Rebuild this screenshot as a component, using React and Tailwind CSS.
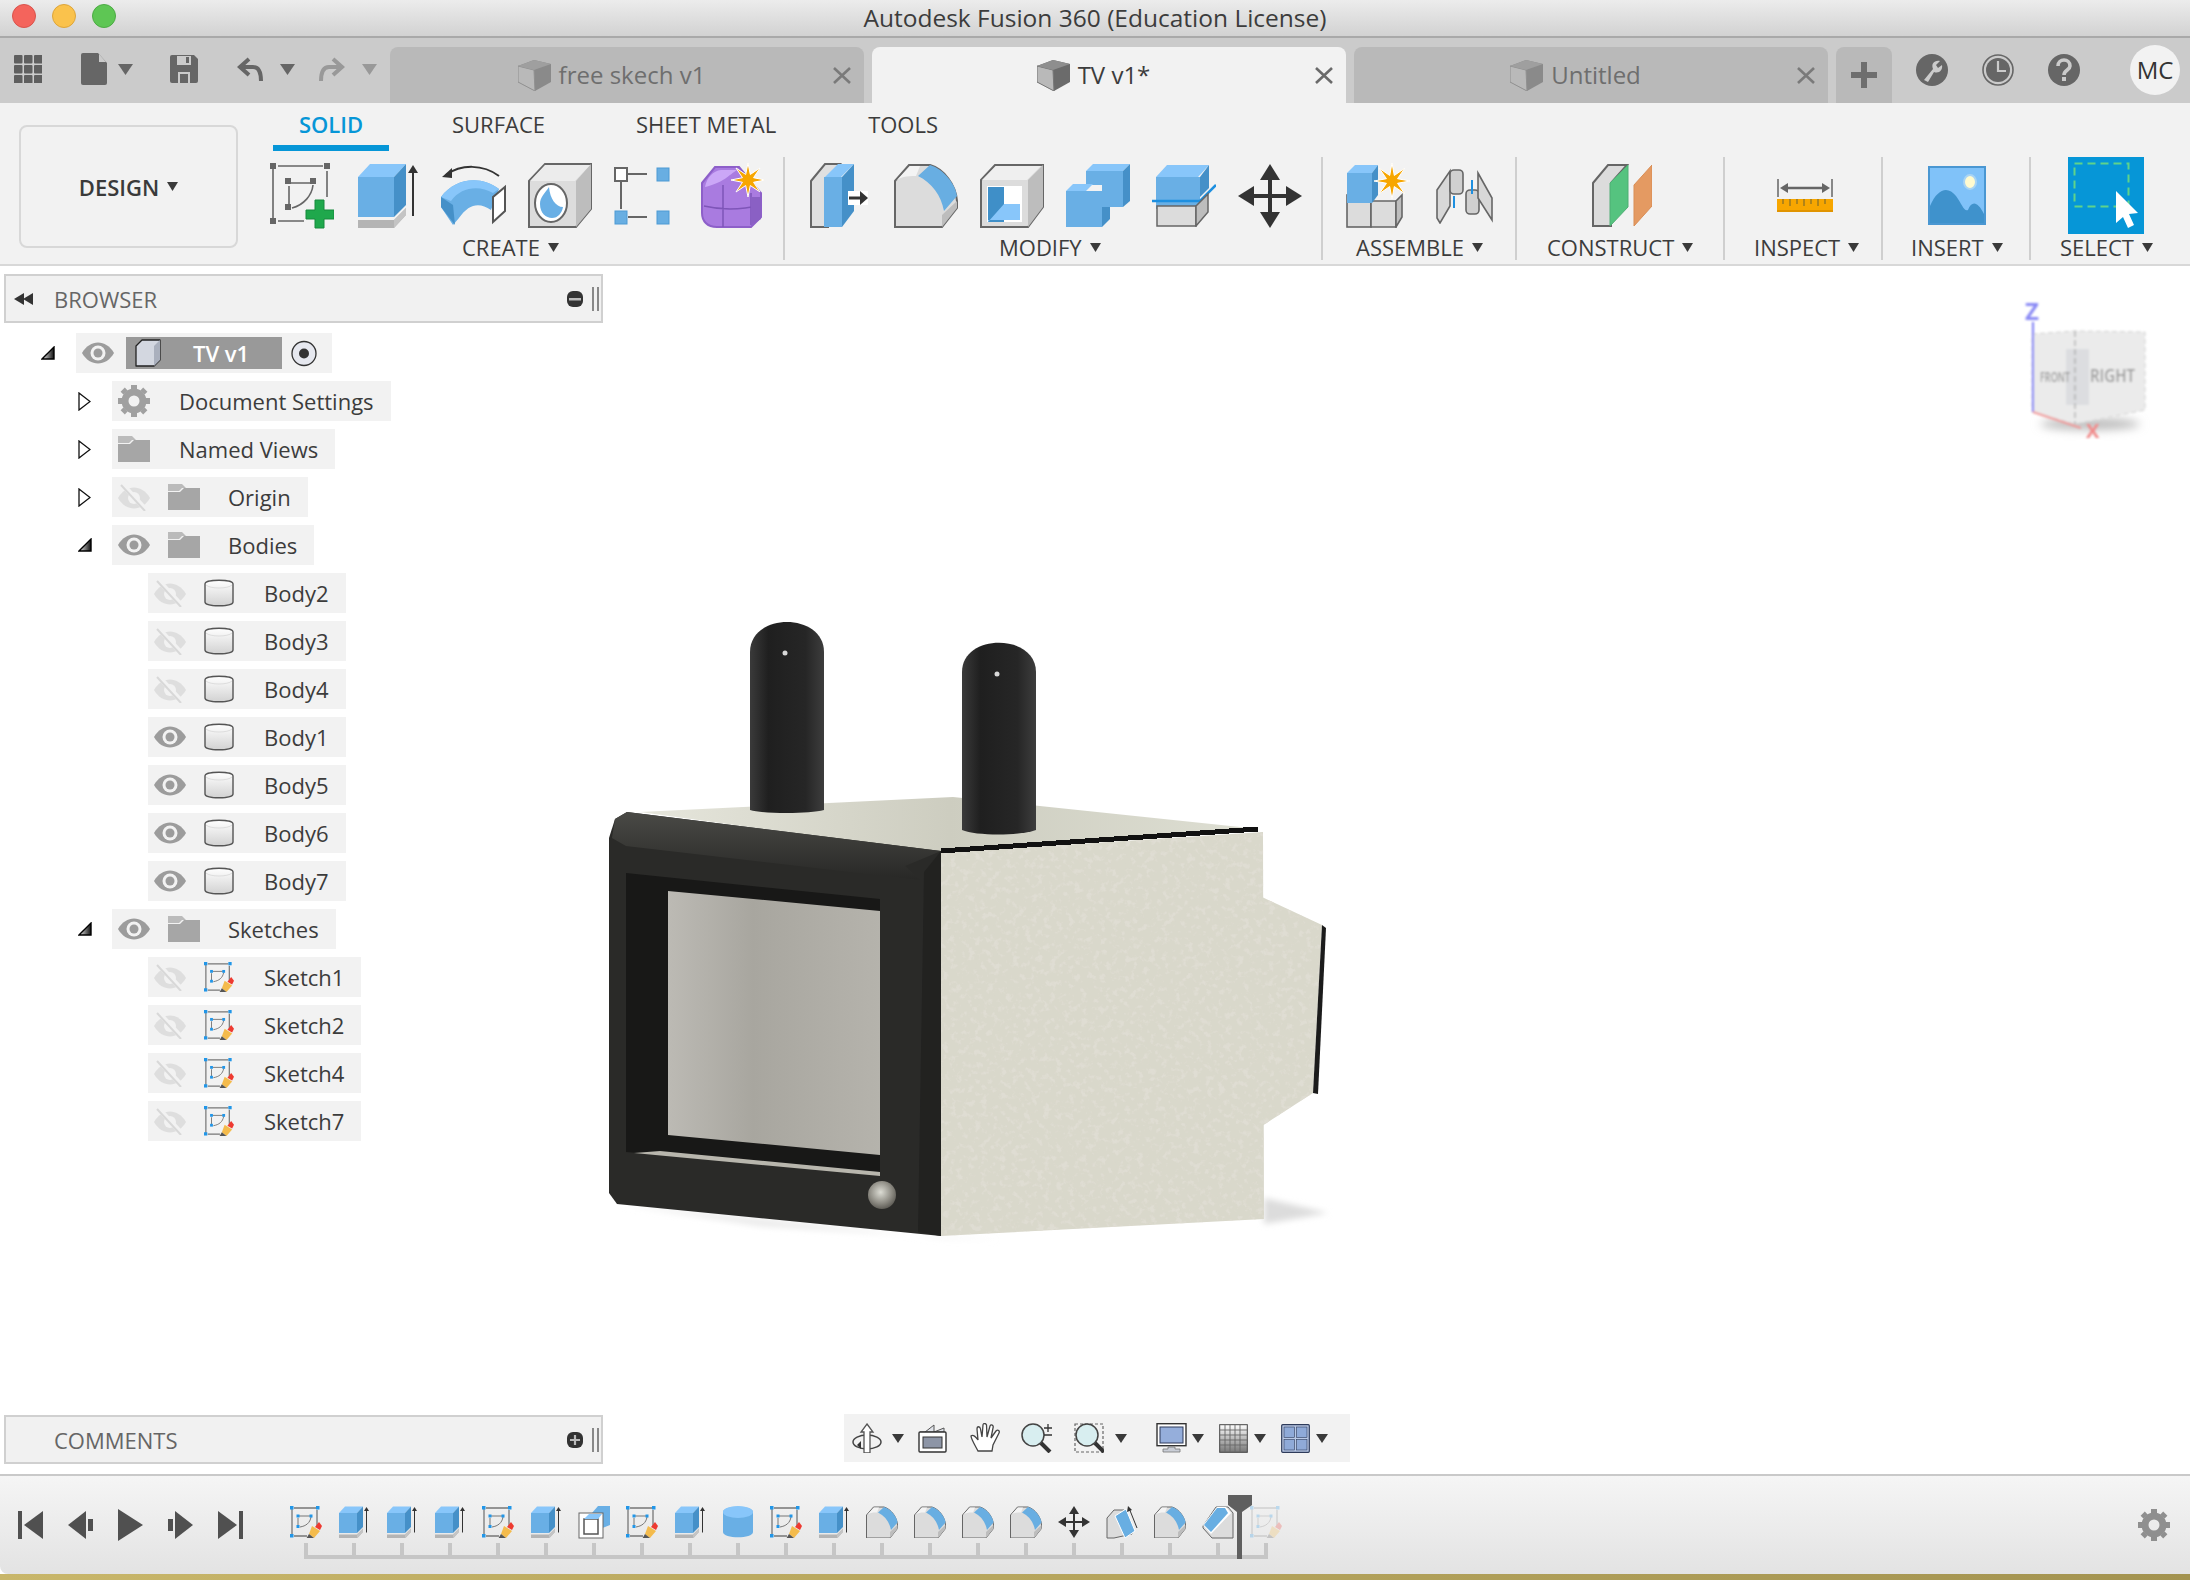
import React from "react";

const Svg = ({ w, h, vb, className = "", children }) => (
  <svg width={w} height={h} viewBox={vb || `0 0 ${w} ${h}`} className={`shrink-0 ${className}`}>
    {children}
  </svg>
);

const star = (cx, cy, r1, r2, n = 8) => {
  const pts = [];
  for (let i = 0; i < n * 2; i++) {
    const r = i % 2 ? r2 : r1;
    const a = (Math.PI * i) / n - Math.PI / 2;
    pts.push(`${cx + r * Math.cos(a)},${cy + r * Math.sin(a)}`);
  }
  return pts.join(" ");
};

const Caret = ({ w = 12, h = 9, className = "", color = "#3a3a3a" }) => (
  <Svg w={w} h={h} className={className}>
    <polygon points={`0,0 ${w},0 ${w / 2},${h}`} fill={color} />
  </Svg>
);

/* ---- ribbon icons ---- */
const SketchNew = ({ className }) => (
  <Svg w={64} h={66} className={className}>
    <g stroke="#666" strokeWidth="1.6" fill="none">
      <path d="M3 6V58M8 3H53M57 8V34M8 58H34" />
      <path d="M21 20H40M19 23V42M43 22C42 32 34 42 22 45" />
    </g>
    <g fill="#666">
      <rect x="0" y="0" width="6" height="6" />
      <rect x="54" y="0" width="6" height="6" />
      <rect x="0" y="55" width="6" height="6" />
      <rect x="15" y="15" width="6" height="6" />
      <rect x="40" y="15" width="6" height="6" />
      <rect x="15" y="41" width="6" height="6" />
    </g>
    <path d="M45 37H54V47H64V56H54V65H45V56H36V47H45Z" fill="#1fa84c" stroke="#178a3d" />
  </Svg>
);

const Extrude = ({ size = 60, className, arrow = true }) => (
  <Svg w={size} h={(size * 65) / 60} vb="0 0 60 65" className={className}>
    <polygon points="0,14 36,14 36,54 0,54" fill="#69afe5" />
    <polygon points="0,14 12,1 48,1 36,14" fill="#88c6fa" />
    <polygon points="36,14 48,1 48,42 36,54" fill="#4590c8" />
    <polygon points="0,57 36,57 48,45 48,52 36,65 0,65" fill="#b4b4b4" />
    <polygon points="36,57 48,45 48,52 36,65" fill="#c4c4c4" />
    {arrow && (
      <>
        <path d="M55 8V53" stroke="#333" strokeWidth="2" />
        <polygon points="50,10 55,2 60,10" fill="#333" />
      </>
    )}
  </Svg>
);

const Revolve = ({ className }) => (
  <Svg w={65} h={66} className={className}>
    <path d="M5 12C20 1 42 1 58 13" fill="none" stroke="#333" strokeWidth="2" />
    <polygon points="1,14 11,5 11,15" fill="#333" />
    <path d="M0 34C14 15 40 12 58 26L50 47C38 39 28 41 18 55L12 62L0 44Z" fill="#69afe5" />
    <path d="M0 34C14 15 40 12 58 26L52 30C38 22 20 24 10 38Z" fill="#88c6fa" />
    <path d="M0 34L12 42L14 62L0 44Z" fill="#4590c8" />
    <polygon points="52,34 64,24 64,48 52,59" fill="#fff" stroke="#555" strokeWidth="2" />
  </Svg>
);

const Hole = ({ className }) => (
  <Svg w={64} h={66} className={className}>
    <polygon points="1,18 17,1 63,1 63,46 48,64 1,64" fill="#dcdcdc" stroke="#666" strokeWidth="2" />
    <polygon points="48,18 63,1 63,46 48,64" fill="#bdbdbd" />
    <polygon points="2,18 17,2 62,2 47,18" fill="#ececec" />
    <ellipse cx="23" cy="40" rx="16" ry="19" fill="#fff" stroke="#666" strokeWidth="2" />
    <path d="M21 24C17 30 12 34 12 41C12 50 18 55 24 55C30 55 34 50 35 44C28 44 22 36 21 24Z" fill="#69afe5" />
  </Svg>
);

const Pattern = ({ className }) => (
  <Svg w={56} h={58} className={className}>
    <rect x="1" y="1" width="12" height="13" fill="#fff" stroke="#666" strokeWidth="2" />
    <path d="M14 7H33M7 15V42M14 50H33" stroke="#666" strokeWidth="2" />
    <rect x="43" y="1" width="12" height="13" fill="#68aee2" stroke="#4d9ad4" />
    <rect x="1" y="44" width="12" height="13" fill="#68aee2" stroke="#4d9ad4" />
    <rect x="43" y="44" width="12" height="13" fill="#68aee2" stroke="#4d9ad4" />
  </Svg>
);

const Form = ({ className }) => (
  <Svg w={63} h={66} className={className}>
    <path d="M1 20L14 4H38L60 30V54L50 64H16C6 64 1 58 1 50Z" fill="#a97be0" stroke="#8d5fc9" strokeWidth="2" />
    <path d="M4 24C6 14 12 8 20 7H36C28 12 22 20 4 24Z" fill="#cba7f7" />
    <path d="M3 43C20 47 40 47 60 42M22 22V64M50 30V62" stroke="#7e55b8" strokeWidth="1.5" fill="none" />
    <path d="M50 34H60V56L50 62Z" fill="#8a60c4" />
    <polygon points={star(47, 17, 17, 6, 8)} fill="#f7a600" stroke="#fff" strokeWidth="1" />
  </Svg>
);

const PressPull = ({ className }) => (
  <Svg w={58} h={65} className={className}>
    <polygon points="1,18 15,1 30,1 18,18 18,64 1,64" fill="#e0e0e0" stroke="#666" strokeWidth="2" />
    <polygon points="15,14 28,1 44,1 31,14" fill="#88c6fa" />
    <rect x="14" y="14" width="18" height="50" fill="#69afe5" />
    <polygon points="32,14 44,1 44,48 32,64" fill="#4590c8" />
    <rect x="38" y="28" width="20" height="14" fill="#fff" />
    <path d="M39 35H52" stroke="#333" strokeWidth="3" />
    <polygon points="50,28 58,35 50,42" fill="#333" />
  </Svg>
);

const Fillet = ({ size = 64, className }) => (
  <Svg w={size} h={(size * 65) / 64} vb="0 0 64 65" className={className}>
    <path d="M1 64V18L15 2H36C50 6 62 22 63 38V45L48 64Z" fill="#dcdcdc" stroke="#666" strokeWidth="2" />
    <path d="M48 64V52L63 38V45Z" fill="#bdbdbd" />
    <path d="M2 18L16 3H26L22 13C12 13 6 14 2 18Z" fill="#f4f4f4" />
    <path d="M24 13L36 2C50 6 62 22 63 33L50 48C47 32 38 20 24 13Z" fill="#68aee2" />
  </Svg>
);

const Shell = ({ className }) => (
  <Svg w={64} h={65} className={className}>
    <polygon points="1,17 15,2 63,2 63,44 48,64 1,64" fill="#dcdcdc" stroke="#666" strokeWidth="2" />
    <polygon points="48,17 63,2 63,44 48,64" fill="#bdbdbd" />
    <polygon points="2,17 16,3 61,3 47,17" fill="#efefef" />
    <rect x="7" y="23" width="35" height="36" fill="#fff" />
    <rect x="8" y="24" width="16" height="35" fill="#3f8fc8" />
    <polygon points="8,59 24,41 40,41 40,57 8,57" fill="#88c6fa" />
  </Svg>
);

const Combine = ({ className }) => (
  <Svg w={64} h={65} className={className}>
    <polygon points="20,8 27,1 64,1 57,8" fill="#88c6fa" />
    <polygon points="20,8 57,8 57,44 36,44 36,22 20,22" fill="#69afe5" />
    <polygon points="57,8 64,1 64,38 57,44" fill="#4590c8" />
    <polygon points="0,28 7,21 27,21 20,28" fill="#88c6fa" />
    <polygon points="0,28 36,28 36,64 0,64" fill="#69afe5" />
    <polygon points="36,44 44,44 44,56 36,64" fill="#4590c8" />
  </Svg>
);

const Offset = ({ className }) => (
  <Svg w={64} h={63} className={className}>
    <polygon points="4,13 15,1 57,1 46,13" fill="#88c6fa" />
    <rect x="4" y="13" width="44" height="32" fill="#69afe5" />
    <polygon points="48,13 57,1 57,24 48,33" fill="#4590c8" />
    <path d="M0 37H48L64 21" stroke="#1d8fe0" strokeWidth="2.5" fill="none" />
    <polygon points="5,42 44,42 44,62 5,62" fill="#dcdcdc" stroke="#666" strokeWidth="1.5" />
    <polygon points="44,42 56,30 56,48 44,62" fill="#bdbdbd" stroke="#666" strokeWidth="1.5" />
  </Svg>
);

const MoveIcon = ({ size = 64, className }) => (
  <Svg w={size} h={size} vb="0 0 64 64" className={className}>
    <path d="M32 8V56M8 32H56" stroke="#333" strokeWidth="4" />
    <polygon points="32,0 42,16 22,16" fill="#333" />
    <polygon points="32,64 42,48 22,48" fill="#333" />
    <polygon points="0,32 16,22 16,42" fill="#333" />
    <polygon points="64,32 48,22 48,42" fill="#333" />
  </Svg>
);

const NewComponent = ({ className }) => (
  <Svg w={64} h={65} className={className}>
    <g stroke="#666" strokeWidth="1.6">
      <rect x="1" y="32" width="24" height="32" fill="#dcdcdc" />
      <polygon points="25,38 50,38 50,64 25,64" fill="#dcdcdc" />
      <polygon points="50,38 56,32 56,54 50,64" fill="#bdbdbd" />
    </g>
    <polygon points="1,10 9,2 32,2 26,10" fill="#88c6fa" />
    <rect x="1" y="10" width="25" height="30" fill="#69afe5" />
    <polygon points="26,10 32,2 32,32 26,40" fill="#4590c8" />
    <polygon points={star(46, 18, 18, 6, 8)} fill="#f7a600" stroke="#fff" strokeWidth="1" />
  </Svg>
);

const Joint = ({ className }) => (
  <Svg w={57} h={56} className={className}>
    <g stroke="#666" strokeWidth="1.6">
      <polygon points="1,22 14,3 14,38 4,55 1,50" fill="#d8d8d8" />
      <rect x="14" y="2" width="13" height="24" rx="4" fill="#d0d0d0" />
      <rect x="30" y="22" width="13" height="24" rx="4" fill="#d0d0d0" />
      <polygon points="42,5 56,30 56,52 42,30" fill="#d8d8d8" />
    </g>
    <path d="M18 28V40M36 12V26" stroke="#1d8fe0" strokeWidth="2" />
  </Svg>
);

const Construct = ({ className }) => (
  <Svg w={60} h={63} className={className}>
    <polygon points="1,19 16,1 35,1 19,19 19,62 1,62" fill="#dcdcdc" stroke="#666" strokeWidth="2" />
    <polygon points="18,19 36,1 36,43 18,62" fill="#55c37f" stroke="#4fae74" />
    <polygon points="42,21 60,1 60,42 42,62" fill="#e49a62" stroke="#d98d55" />
  </Svg>
);

const Inspect = ({ className }) => (
  <Svg w={56} h={34} className={className}>
    <path d="M1 0V18M55 0V18" stroke="#666" strokeWidth="1.5" />
    <path d="M8 9H48" stroke="#666" strokeWidth="2.5" />
    <polygon points="3,9 11,4 11,14" fill="#666" />
    <polygon points="53,9 45,4 45,14" fill="#666" />
    <rect x="0" y="20" width="56" height="13" fill="#f7a600" />
    <path d="M6 20V25M13 20V27M20 20V25M27 20V27M34 20V25M41 20V27M48 20V25" stroke="#9b7a20" strokeWidth="1.5" />
    <rect x="0" y="31" width="56" height="2" fill="#e19400" />
  </Svg>
);

const Insert = ({ className }) => (
  <Svg w={58} h={59} className={className}>
    <rect x="1" y="1" width="56" height="57" fill="#80c2f9" stroke="#4a97d2" strokeWidth="2" />
    <ellipse cx="42" cy="16" rx="6" ry="7" fill="#fffbd0" stroke="#a8d4f4" strokeWidth="2" />
    <path d="M2 40C10 22 20 20 28 30C34 38 36 46 40 44C44 34 50 36 56 48V57H2Z" fill="#3f92cc" />
  </Svg>
);

const Select = ({ className }) => (
  <Svg w={76} h={77} className={className}>
    <rect width="76" height="77" fill="#0696d7" />
    <rect x="6.5" y="6.5" width="54" height="43" fill="none" stroke="#5fd38a" strokeWidth="2" strokeDasharray="8 5" />
    <polygon points="48,34 48,66 55,60 60,71 66,68 61,57 70,56" fill="#fff" />
  </Svg>
);

/* ---- timeline icons ---- */
const SketchMini = ({ size = 32, faded, className }) => (
  <Svg w={size} h={size} vb="0 0 32 32" className={`${faded ? "opacity-25" : ""} ${className || ""}`}>
    <g stroke="#777" strokeWidth="1" fill="none">
      <path d="M2 3V29M4 2H26M27 4V20M4 30H17" strokeWidth="1.3" />
      <path d="M9 10H20M8 12V20M21 11C20 17 16 20 10 21" />
    </g>
    <g fill="#2196e8">
      <rect x="0" y="0" width="3.5" height="3.5" />
      <rect x="26" y="0" width="3.5" height="3.5" />
      <rect x="0" y="28" width="3.5" height="3.5" />
      <rect x="6.5" y="8.5" width="3" height="3" />
      <rect x="19.5" y="8.5" width="3" height="3" />
      <rect x="6.5" y="19" width="3" height="3" />
    </g>
    <polygon points="22,20 30,25 24,32 19,28" fill="#f4bb4c" />
    <polygon points="25,21 29,16 32,20 30,24" fill="#ee3a30" />
    <polygon points="19,28 24,32 16,33" fill="#555" />
  </Svg>
);

const PlaneMini = () => (
  <Svg w={32} h={34} vb="0 0 32 34">
    <polygon points="14,8 20,1 32,1 32,20 22,24 14,14" fill="#69afe5" />
    <rect x="1" y="8" width="24" height="25" fill="#fff" stroke="#666" />
    <rect x="6" y="14" width="14" height="15" fill="#fff" stroke="#555" strokeWidth="1.5" />
    <polygon points="6,14 11,9 24,9 20,14" fill="#88c6fa" />
  </Svg>
);

const CylMini = () => (
  <Svg w={30} h={32} vb="0 0 30 32">
    <path d="M0 6C0 -1 30 -1 30 6V26C30 33 0 33 0 26Z" fill="#69afe5" />
    <ellipse cx="15" cy="6" rx="15" ry="6" fill="#88c6fa" />
  </Svg>
);

const PushMini = () => (
  <Svg w={32} h={33} vb="0 0 32 33">
    <polygon points="1,32 1,12 8,4 18,4 26,28 8,32" fill="#dcdcdc" stroke="#666" />
    <polygon points="9,10 20,3 29,25 19,32" fill="#68aee2" stroke="#fff" />
    <path d="M23 2L31 22" stroke="#333" strokeWidth="1" />
    <polygon points="21,6 22,0 26,4" fill="#333" />
  </Svg>
);

const ChamferMini = () => (
  <Svg w={32} h={33} vb="0 0 32 33">
    <polygon points="1,20 14,1 26,1 31,7 31,32 10,32 1,22" fill="#dcdcdc" stroke="#666" />
    <polygon points="1,19 15,1 24,1 29,7 9,28" fill="#fff" />
    <polygon points="2,19 15,2 23,2 26,7 9,26" fill="#68aee2" />
  </Svg>
);

const FEATURES = [
  <SketchMini key="0" />, <Extrude key="1" size={30} />, <Extrude key="2" size={30} />, <Extrude key="3" size={30} />,
  <SketchMini key="4" />, <Extrude key="5" size={30} />, <PlaneMini key="6" />, <SketchMini key="7" />,
  <Extrude key="8" size={30} />, <CylMini key="9" />, <SketchMini key="10" />, <Extrude key="11" size={30} />,
  <Fillet key="12" size={32} />, <Fillet key="13" size={32} />, <Fillet key="14" size={32} />, <Fillet key="15" size={32} />,
  <MoveIcon key="16" size={32} />, <PushMini key="17" />, <Fillet key="18" size={32} />, <ChamferMini key="19" />,
  <SketchMini key="20" faded />,
];

/* ---- browser tree icons ---- */
const Eye = ({ on }) =>
  on ? (
    <Svg w={32} h={24}>
      <path d="M0 12C8 -2 24 -2 32 12C24 26 8 26 0 12Z" fill="#9c9c9c" />
      <circle cx="16" cy="12" r="7.5" fill="#f2f2f2" />
      <circle cx="16" cy="12" r="4.5" fill="#9c9c9c" />
    </Svg>
  ) : (
    <Svg w={32} h={27}>
      <path d="M0 14C8 0 24 0 32 14C24 28 8 28 0 14Z" fill="#dedede" />
      <circle cx="16" cy="14" r="6" fill="#f2f2f2" />
      <path d="M4 0L29 27" stroke="#f2f2f2" strokeWidth="5" />
      <path d="M3 1L27 27" stroke="#d8d8d8" strokeWidth="2" />
    </Svg>
  );

const Folder = () => (
  <Svg w={32} h={26}>
    <path d="M0 0H14L18 4H14L11 7H0Z" fill="#bbb" />
    <path d="M0 8H12L16 4H32V26H0Z" fill="#a6a6a6" />
  </Svg>
);

const Gear = ({ size = 32, color = "#a0a0a0" }) => (
  <Svg w={size} h={size} vb="0 0 32 32">
    <path d="M16 4V0M16 32V28M4 16H0M32 16H28M7.5 7.5L4.7 4.7M27.3 27.3L24.5 24.5M7.5 24.5L4.7 27.3M27.3 4.7L24.5 7.5" stroke={color} strokeWidth="6" />
    <circle cx="16" cy="16" r="9" fill="none" stroke={color} strokeWidth="7" />
  </Svg>
);

const Cyl = () => (
  <Svg w={30} h={29}>
    <defs>
      <linearGradient id="cyl" x1="0" x2="0" y1="0" y2="1">
        <stop offset="0" stopColor="#fff" />
        <stop offset="1" stopColor="#d2d2d2" />
      </linearGradient>
    </defs>
    <path d="M1 5C1 0 29 0 29 5V23C29 28 1 28 1 23Z" fill="url(#cyl)" stroke="#555" strokeWidth="1.4" />
    <path d="M2 6C6 10 24 10 28 6" stroke="#ddd" fill="none" />
  </Svg>
);

const Twist = ({ open }) =>
  open ? (
    <Svg w={14} h={14} className="mt-0">
      <defs>
        <linearGradient id="tw" x1="0" x2="1" y1="0" y2="0">
          <stop offset="0" stopColor="#eee" />
          <stop offset="1" stopColor="#111" />
        </linearGradient>
      </defs>
      <polygon points="1,13 13,1 13,13" fill="url(#tw)" stroke="#000" strokeWidth="1.4" />
    </Svg>
  ) : (
    <Svg w={13} h={19}>
      <polygon points="1,1 12,9.5 1,18" fill="#fff" stroke="#111" strokeWidth="1.3" />
    </Svg>
  );

const Row = ({ indent, open, eye, icon, label, labelClass }) => (
  <div className={`flex items-center h-10 ${indent}`}>
    {open !== undefined && (
      <div className="w-[34px] flex items-center shrink-0">
        <Twist open={open} />
      </div>
    )}
    <div className={`flex items-center h-10 bg-[#f2f2f2] px-[6px] pr-[17px] ${open === undefined ? "" : ""}`}>
      {eye !== undefined && (
        <div className="w-[50px] flex items-center">
          <Eye on={eye} />
        </div>
      )}
      <div className={eye === undefined ? "w-[61px] flex items-center" : "w-[60px] flex items-center"}>{icon}</div>
      <span className={`text-[22px] leading-none text-[#3c3c3c] ${labelClass || ""}`}>{label}</span>
    </div>
  </div>
);

const SUB = "ml-[148px]";
const TOP = "ml-[78px]";

const Tree = () => (
  <div className="flex flex-col gap-2 mt-[10px]">
    <div className="flex items-center h-10 ml-[41px]">
      <div className="w-[35px] flex items-center">
        <Twist open />
      </div>
      <div className="flex items-center h-10 w-[256px] bg-[#f2f2f2] pl-[6px]">
        <div className="w-11 flex items-center">
          <Eye on />
        </div>
        <div className="flex items-center w-[156px] h-8 bg-[#999] pl-[9px]">
          <Svg w={26} h={28}>
            <polygon points="1,7 7,1 25,1 25,21 19,27 1,27" fill="#d3d7e0" stroke="#222" strokeWidth="1.3" strokeLinejoin="round" />
            <polygon points="19,7 25,1 25,21 19,27" fill="#aab0bd" />
          </Svg>
          <span className="ml-[32px] text-[22px] font-semibold leading-none text-white">TV v1</span>
        </div>
        <Svg w={26} h={27} className="ml-[9px]">
          <circle cx="13" cy="13.5" r="12" fill="#e6e8ef" stroke="#333" strokeWidth="1.3" />
          <circle cx="13" cy="13.5" r="5" fill="#333" />
        </Svg>
      </div>
    </div>
    <Row indent={TOP} open={false} icon={<Gear />} label="Document Settings" labelClass="" />
    <Row indent={TOP} open={false} icon={<Folder />} label="Named Views" />
    <Row indent={TOP} open={false} eye={false} icon={<Folder />} label="Origin" />
    <Row indent={TOP} open eye icon={<Folder />} label="Bodies" />
    {[
      ["Body2", false],
      ["Body3", false],
      ["Body4", false],
      ["Body1", true],
      ["Body5", true],
      ["Body6", true],
      ["Body7", true],
    ].map(([n, on]) => (
      <Row key={n} indent={SUB} eye={on} icon={<Cyl />} label={n} />
    ))}
    <Row indent={TOP} open eye icon={<Folder />} label="Sketches" />
    {["Sketch1", "Sketch2", "Sketch4", "Sketch7"].map((n) => (
      <Row key={n} indent={SUB} eye={false} icon={<SketchMini size={30} />} label={n} />
    ))}
  </div>
);

const PanelHead = ({ title, children, left }) => (
  <div className="flex items-center w-[599px] h-[49px] ml-1 bg-[#f1f1f1] border-2 border-[#d0d0d0]">
    <div className="w-12 pl-2 flex items-center">{left}</div>
    <span className="text-[22px] leading-none text-[#666]">{title}</span>
    <div className="ml-auto mr-[2px] flex items-center gap-[9px]">
      {children}
      <div className="w-[7px] h-[24px] border-l-2 border-r-2 border-[#888]" />
    </div>
  </div>
);

/* ---- top bar icons ---- */
const DocCube = ({ x, dim }) => (
  <Svg w={33} h={31} vb="0 0 33 31" className={dim ? "opacity-60" : ""}>
    <polygon points="0,6 16,0 33,4 33,22 17,31 0,22" fill="#6b6b6b" />
    <polygon points="0,6 16,10 17,31 0,22" fill="#b9b9b9" stroke="#777" strokeWidth="1" />
    <polygon points="0,6 16,0 33,4 16,10" fill="#8e8e8e" />
  </Svg>
);

const Close = ({ color = "#7a7a7a" }) => (
  <Svg w={18} h={17} className="mr-[13px]">
    <path d="M1 1L17 16M17 1L1 16" stroke={color} strokeWidth="2.6" />
  </Svg>
);

const DocTab = ({ name, active, width, gapClass, className }) => (
  <div className={`flex items-center h-14 rounded-t-[8px] ${active ? "bg-[#f2f2f2]" : "bg-[#b9b9b9]"} ${width} ${className || ""}`}>
    <div className={`flex-1 flex items-center justify-center ${gapClass}`}>
      <DocCube dim={!active} />
      <span className={`text-[24px] leading-none ${active ? "text-[#3c3c3c]" : "text-[#6e6e6e]"}`}>{name}</span>
    </div>
    <Close color={active ? "#6a6a6a" : "#7a7a7a"} />
  </div>
);

const TopBar = () => (
  <div className="flex h-[65px] bg-[#cbcbcb] items-end">
    <div className="flex items-center h-[60px] w-[390px] pb-[8px] shrink-0">
      <Svg w={28} h={28} className="ml-[14px]">
        {[0, 1, 2].map((y) =>
          [0, 1, 2].map((x) => <rect key={`${x}${y}`} x={x * 10} y={y * 10} width="8.5" height="8.5" rx="1" fill="#5f5f5f" />)
        )}
      </Svg>
      <Svg w={26} h={32} className="ml-[39px]">
        <path d="M2 0H17L26 10V30Q26 32 24 32H2Q0 32 0 30V2Q0 0 2 0Z" fill="#666" />
        <path d="M18 1L25 9H18Z" fill="#cbcbcb" />
      </Svg>
      <Caret w={15} h={11} color="#666" className="ml-[11px]" />
      <Svg w={28} h={28} className="ml-[37px]">
        <path d="M2 0H24L28 4V26Q28 28 26 28H2Q0 28 0 26V2Q0 0 2 0Z" fill="#666" />
        <rect x="7" y="1" width="14" height="9" fill="#cbcbcb" />
        <rect x="16" y="2" width="3" height="6" fill="#666" />
        <path d="M9 28V18H19V28" fill="none" stroke="#cbcbcb" strokeWidth="2" />
      </Svg>
      <Svg w={27} h={24} className="ml-[39px]">
        <path d="M5 10H16C22 10 24 15 24 24" fill="none" stroke="#666" strokeWidth="4" />
        <path d="M12 2L3 10L12 18" fill="none" stroke="#666" strokeWidth="4" />
      </Svg>
      <Caret w={15} h={11} color="#666" className="ml-[16px]" />
      <Svg w={27} h={24} className="ml-[23px]">
        <path d="M22 10H11C5 10 3 15 3 24" fill="none" stroke="#999" strokeWidth="4" />
        <path d="M15 2L24 10L15 18" fill="none" stroke="#999" strokeWidth="4" />
      </Svg>
      <Caret w={15} h={11} color="#999" className="ml-[17px]" />
    </div>
    <DocTab name="free skech v1" width="w-[474px]" gapClass="gap-2" />
    <DocTab name="TV v1*" active width="w-[474px] ml-2" gapClass="gap-2" />
    <DocTab name="Untitled" width="w-[474px] ml-2" gapClass="gap-2" />
    <div className="flex items-center justify-center w-14 h-14 ml-2 bg-[#b9b9b9] rounded-t-[8px]">
      <Svg w={26} h={26}>
        <path d="M13 0V26M0 13H26" stroke="#6e6e6e" strokeWidth="6" />
      </Svg>
    </div>
    <div className="flex items-center h-[65px] pb-[1px] ml-[24px]">
      <Svg w={32} h={32}>
        <circle cx="16" cy="16" r="16" fill="#666" />
        <path d="M8 26L17 15C15 10 18 6 24 7L20 11L22 14L26 11C27 16 23 20 18 18L12 28Z" fill="#cbcbcb" />
      </Svg>
      <Svg w={32} h={32} className="ml-[34px]">
        <circle cx="16" cy="16" r="15" fill="none" stroke="#666" strokeWidth="1.6" />
        <circle cx="16" cy="16" r="12" fill="#666" />
        <path d="M16 7V17H24" fill="none" stroke="#cbcbcb" strokeWidth="2.2" />
      </Svg>
      <Svg w={32} h={32} className="ml-[34px]">
        <circle cx="16" cy="16" r="16" fill="#666" />
        <path d="M10 12C10 4 22 4 22 12C22 16 16 16 16 21" fill="none" stroke="#cbcbcb" strokeWidth="3.6" />
        <rect x="14" y="23" width="4" height="4" fill="#cbcbcb" />
      </Svg>
      <div className="flex items-center justify-center w-[50px] h-[50px] ml-[50px] rounded-full bg-[#f2f2f2] text-[24px] text-[#333]">
        MC
      </div>
    </div>
  </div>
);

const Group = ({ width, iconsClass, labelClass, label, last, children }) => (
  <div className={`h-[103px] shrink-0 flex flex-col ${width} ${last ? "" : "border-r-2 border-[#cfcfcf]"}`}>
    <div className={`h-[78px] flex items-center ${iconsClass || ""}`}>{children}</div>
    <div className={`flex items-center gap-2 h-[26px] ${labelClass}`}>
      <span className="text-[22px] leading-none text-[#3c3c3c]">{label}</span>
      <Caret w={11} h={9} />
    </div>
  </div>
);

const Ribbon = () => (
  <div className="flex h-[163px] bg-[#f2f2f2] border-b-2 border-[#d8d8d8]">
    <div className="flex items-center justify-center gap-2 ml-[19px] mt-[22px] w-[219px] h-[123px] rounded-[8px] border-2 border-[#d8d8d8] shrink-0">
      <span className="text-[22px] font-semibold leading-none text-[#3a3a3a]">DESIGN</span>
      <Caret w={11} h={9} />
    </div>
    <div className="ml-[24px] flex flex-col">
      <div className="flex h-[48px] text-[22px] text-[#3c3c3c] shrink-0">
        <div className="ml-[11px] w-[116px] h-[48px] border-b-[6px] border-[#0696d7] flex items-center justify-center font-semibold text-[#0696d7]">
          SOLID
        </div>
        <div className="ml-[63px] flex items-center h-[42px]">SURFACE</div>
        <div className="ml-[91px] flex items-center h-[42px]">SHEET METAL</div>
        <div className="ml-[92px] flex items-center h-[42px]">TOOLS</div>
      </div>
      <div className="flex mt-[6px]">
        <Group width="w-[523px]" iconsClass="pl-[8px]" labelClass="pl-[200px]" label="CREATE">
          <SketchNew />
          <Extrude className="ml-[24px]" />
          <Revolve className="ml-[23px]" />
          <Hole className="ml-[22px]" />
          <Pattern className="ml-[22px]" />
          <Form className="ml-[31px]" />
        </Group>
        <Group width="w-[538px]" iconsClass="pl-[25px]" labelClass="pl-[214px]" label="MODIFY">
          <PressPull />
          <Fillet className="ml-[26px]" />
          <Shell className="ml-[22px]" />
          <Combine className="ml-[22px]" />
          <Offset className="ml-[22px]" />
          <MoveIcon className="ml-[22px]" />
        </Group>
        <Group width="w-[194px]" iconsClass="pl-[23px]" labelClass="pl-[33px]" label="ASSEMBLE">
          <NewComponent />
          <Joint className="ml-[26px]" />
        </Group>
        <Group width="w-[208px]" iconsClass="pl-[75px]" labelClass="pl-[30px]" label="CONSTRUCT">
          <Construct />
        </Group>
        <Group width="w-[158px]" iconsClass="pl-[52px]" labelClass="pl-[29px]" label="INSPECT">
          <Inspect />
        </Group>
        <Group width="w-[148px]" iconsClass="pl-[45px]" labelClass="pl-[28px]" label="INSERT">
          <Insert />
        </Group>
        <Group width="w-[159px]" iconsClass="pl-[37px]" labelClass="pl-[29px]" label="SELECT" last>
          <Select />
        </Group>
      </div>
    </div>
  </div>
);

/* ---- nav bar ---- */
const NavBar = () => (
  <div className="flex items-center w-[506px] h-12 ml-[241px] mb-[12px] bg-[#f2f2f2] pl-2 shrink-0">
    <Svg w={30} h={30}>
      <ellipse cx="15" cy="19" rx="14" ry="7" fill="none" stroke="#444" strokeWidth="1.5" />
      <path d="M15 1L21 9H18V30H12V9H9Z" fill="#fff" stroke="#555" strokeWidth="1.3" />
      <polygon points="5,22 9,18 9,26" fill="#333" />
    </Svg>
    <Caret w={12} h={9} className="ml-[10px]" />
    <Svg w={29} h={29} className="ml-[14px]">
      <path d="M2 12L16 1V8L26 4V8H2Z" fill="#e0e3ea" stroke="#555" />
      <rect x="1" y="8" width="27" height="20" rx="1" fill="#fff" stroke="#333" strokeWidth="1.4" />
      <rect x="5" y="13" width="19" height="11" fill="#8d95a6" stroke="#333" />
    </Svg>
    <Svg w={31} h={30} className="ml-[23px]">
      <path d="M8 28C6 24 1 16 1 13C3 11 6 14 8 17L7 6C7 3 10 3 10.5 6L12 14L13 2C13 0 16 0 16.5 2L17 14L20 3C21 1 24 2 23 5L21 15L26 8C28 6 30 8 29 10L23 22L22 28Z" fill="#fff" stroke="#444" strokeWidth="1.3" />
    </Svg>
    <Svg w={31} h={30} className="ml-[20px]">
      <circle cx="12" cy="12" r="11" fill="#d8eef0" stroke="#444" strokeWidth="1.5" />
      <path d="M20 20L29 29" stroke="#333" strokeWidth="4" />
      <path d="M27 1V9M23 5H31M23 12H31" stroke="#333" strokeWidth="1.3" />
    </Svg>
    <Svg w={30} h={30} className="ml-[22px]">
      <rect x="1" y="1" width="28" height="28" fill="none" stroke="#666" strokeWidth="1.2" strokeDasharray="3 2" />
      <circle cx="13" cy="12" r="11" fill="#d8eef0" stroke="#444" strokeWidth="1.5" />
      <path d="M21 20L30 29" stroke="#333" strokeWidth="4" />
    </Svg>
    <Caret w={12} h={9} className="ml-[11px]" />
    <Svg w={31} h={30} className="ml-[29px]">
      <rect x="1" y="0.7" width="29" height="22" fill="#fff" stroke="#333" strokeWidth="1.4" />
      <rect x="4" y="4" width="23" height="16" fill="#95aedb" stroke="#2e3b5a" />
      <path d="M12 24H19V26H24V29H7V26H12Z" fill="#c9cdd6" stroke="#777" strokeWidth="0.8" />
    </Svg>
    <Caret w={12} h={9} className="ml-[5px]" />
    <Svg w={29} h={29} className="ml-[15px]">
      <defs>
        <linearGradient id="gridg" x1="0" x2="0" y1="0" y2="1">
          <stop offset="0" stopColor="#fff" />
          <stop offset="1" stopColor="#777" />
        </linearGradient>
      </defs>
      <rect x="0.7" y="0.7" width="27.6" height="27.6" fill="url(#gridg)" stroke="#444" />
      <path d="M6 1V28M11 1V28M16 1V28M21 1V28M1 6H28M1 11H28M1 16H28M1 21H28" stroke="#666" strokeWidth="0.9" />
    </Svg>
    <Caret w={12} h={9} className="ml-[6px]" />
    <Svg w={29} h={29} className="ml-[15px]">
      <rect x="0.7" y="0.7" width="27.6" height="27.6" rx="1" fill="#b9c9e6" stroke="#2e3b5a" strokeWidth="1.2" />
      <rect x="3" y="3" width="10.5" height="10.5" fill="#8faad8" stroke="#2e3b5a" strokeWidth="0.6" />
      <rect x="15.5" y="3" width="10.5" height="10.5" fill="#8faad8" stroke="#2e3b5a" strokeWidth="0.6" />
      <rect x="3" y="15.5" width="10.5" height="10.5" fill="#8faad8" stroke="#2e3b5a" strokeWidth="0.6" />
      <rect x="15.5" y="15.5" width="10.5" height="10.5" fill="#8faad8" stroke="#2e3b5a" strokeWidth="0.6" />
    </Svg>
    <Caret w={12} h={9} className="ml-[6px]" />
  </div>
);

/* ---- model in the canvas ---- */
const Tv = () => (
  <svg width="760" height="660" viewBox="600 610 760 660" className="absolute left-[600px] top-[344px]">
    <defs>
      <filter id="speck" x="0" y="0" width="100%" height="100%">
        <feTurbulence type="fractalNoise" baseFrequency="0.16" numOctaves="3" seed="7" result="n" />
        <feColorMatrix in="n" values="0 0 0 0 0.74  0 0 0 0 0.72  0 0 0 0 0.65  5 0 0 0 -2.6" result="s" />
        <feComposite in="s" in2="SourceGraphic" operator="in" result="c" />
        <feMerge>
          <feMergeNode in="SourceGraphic" />
          <feMergeNode in="c" />
        </feMerge>
      </filter>
      <filter id="soft" x="-20%" y="-100%" width="140%" height="300%">
        <feGaussianBlur stdDeviation="3" />
      </filter>
      <linearGradient id="ant" x1="0" x2="1" y1="0" y2="0">
        <stop offset="0" stopColor="#3a3a3a" />
        <stop offset="0.25" stopColor="#1f1f1f" />
        <stop offset="0.75" stopColor="#262626" />
        <stop offset="1" stopColor="#3d3d3d" />
      </linearGradient>
      <linearGradient id="screen" x1="0" x2="1" y1="0" y2="0">
        <stop offset="0" stopColor="#bcbab4" />
        <stop offset="0.4" stopColor="#a8a69f" />
        <stop offset="1" stopColor="#b5b3ac" />
      </linearGradient>
      <linearGradient id="topf" x1="0" x2="1" y1="0" y2="0">
        <stop offset="0" stopColor="#e6e6dc" />
        <stop offset="0.5" stopColor="#cdcdc0" />
        <stop offset="1" stopColor="#dedfd3" />
      </linearGradient>
      <linearGradient id="band" x1="0" x2="0" y1="0" y2="1">
        <stop offset="0" stopColor="#4a4a46" />
        <stop offset="1" stopColor="#282826" />
      </linearGradient>
      <radialGradient id="knob" cx="0.45" cy="0.4" r="0.65">
        <stop offset="0" stopColor="#dcdcd4" />
        <stop offset="0.6" stopColor="#8f8d85" />
        <stop offset="1" stopColor="#55534d" />
      </radialGradient>
    </defs>
    <polygon points="1264,1198 1328,1213 1264,1224" fill="#dcdcdc" filter="url(#soft)" />
    <polygon points="620,1204 941,1238 1000,1240 760,1226" fill="#e8e8e8" filter="url(#soft)" />
    <polygon points="640,812 953,797 1259,829 941,853" fill="url(#topf)" />
    <polygon points="1262,897 1322,925 1313,1093 1262,1126" fill="#d9d8cb" filter="url(#speck)" />
    <polygon points="1322,925 1326,928 1318,1094 1313,1093" fill="#1b1b1b" />
    <path d="M750 652C750 612 824 612 824 652V810C810 814 764 814 750 810Z" fill="url(#ant)" />
    <circle cx="785" cy="653" r="2.5" fill="#d8d8d8" />
    <path d="M962 672C962 633 1036 633 1036 672V830C1020 836 976 836 962 830Z" fill="url(#ant)" />
    <circle cx="997" cy="674" r="2.5" fill="#d8d8d8" />
    <polygon points="941,853 1263,832 1264,1219 941,1236" fill="#d9d8cb" filter="url(#speck)" />
    <path d="M941 851L1258 829" stroke="#111" strokeWidth="5" shapeRendering="crispEdges" />
    <polygon points="627,812 941,851 941,1236 617,1204 609,1193 609,838 615,819" fill="#2a2a28" />
    <polygon points="627,812 941,851 905,866 920,880 626,846 612,838 615,819" fill="url(#band)" />
    <polygon points="924,872 941,851 941,1236 918,1232" fill="#222220" />
    <polygon points="626,873 880,899 880,1172 626,1152" fill="#181817" />
    <polygon points="668,891 880,911 880,1155 668,1135" fill="url(#screen)" />
    <polygon points="634,1153 660,1151 880,1172 880,1176" fill="#b8b6ad" />
    <circle cx="882" cy="1195" r="14" fill="url(#knob)" />
  </svg>
);

const ViewCube = () => (
  <div className="absolute left-[2020px] top-[30px] w-[150px] h-[150px]">
    <svg width="150" height="150" viewBox="2020 296 150 150">
      <defs>
        <filter id="b1" x="-20%" y="-20%" width="140%" height="140%">
          <feGaussianBlur stdDeviation="0.8" />
        </filter>
        <filter id="b2" x="-20%" y="-100%" width="140%" height="300%">
          <feGaussianBlur stdDeviation="5" />
        </filter>
      </defs>
      <ellipse cx="2090" cy="424" rx="50" ry="6" fill="#bbb" filter="url(#b2)" />
      <g filter="url(#b1)">
        <polygon points="2032,334 2075,331 2145,332 2145,410 2075,424 2032,412" fill="#ebebeb" stroke="#d0d0d0" strokeDasharray="5 3" />
        <rect x="2066" y="349" width="23" height="56" fill="#dcdde0" />
        <path d="M2075 331V424" stroke="#999" strokeDasharray="6 3" />
        <path d="M2033 322V412" stroke="#7f7ff5" strokeWidth="2" />
        <path d="M2033 412L2081 428" stroke="#f19999" strokeWidth="2" />
        <text x="2040" y="382" fontSize="15" fontWeight="600" fill="#9a9a9a" textLength="30" lengthAdjust="spacingAndGlyphs">FRONT</text>
        <text x="2090" y="382" fontSize="18" fontWeight="600" fill="#9a9a9a" textLength="45" lengthAdjust="spacingAndGlyphs">RIGHT</text>
        <text x="2025" y="320" fontSize="24" fontWeight="700" fill="#8a8af5">Z</text>
        <text x="2086" y="438" fontSize="20" fontWeight="700" fill="#f18a8a">X</text>
      </g>
    </svg>
  </div>
);

const Timeline = () => (
  <div className="relative flex items-center h-[100px] border-t-2 border-[#c9c9c9] bg-gradient-to-b from-[#f5f5f5] to-[#e3e3e3] rounded-bl-[8px]">
    <div className="flex items-center gap-[25px] ml-[18px]">
      <Svg w={25} h={28}>
        <rect x="0" y="0" width="4" height="28" fill="#505050" />
        <polygon points="6,14 25,0 25,28" fill="#505050" />
      </Svg>
      <Svg w={25} h={28}>
        <polygon points="0,14 18,0 18,28" fill="#505050" />
        <rect x="20" y="8" width="5" height="12" fill="#505050" />
      </Svg>
      <Svg w={25} h={32}>
        <polygon points="0,0 25,16 0,32" fill="#505050" />
      </Svg>
      <Svg w={25} h={28}>
        <rect x="0" y="8" width="5" height="12" fill="#505050" />
        <polygon points="7,0 25,14 7,28" fill="#505050" />
      </Svg>
      <Svg w={25} h={28}>
        <rect x="21" y="0" width="4" height="28" fill="#505050" />
        <polygon points="0,0 19,14 0,28" fill="#505050" />
      </Svg>
    </div>
    <div className="relative ml-[39px] mt-[12px]">
      <div className="flex">
        {FEATURES.map((f, i) => (
          <div key={i} className="w-12 flex flex-col items-center">
            <div className="h-[38px] flex items-center justify-center">{f}</div>
            <div className="w-[4px] h-[12px] mt-[2px] bg-[#c6c6c6]" />
          </div>
        ))}
      </div>
      <div className="ml-[22px] w-[964px] h-1 bg-[#c6c6c6]" />
      <svg width="26" height="64" className="absolute left-[945px] top-[-8px]">
        <polygon points="1,0 25,0 25,10 15,17 15,64 10,64 10,17 1,10" fill="#5f5f5f" />
      </svg>
    </div>
    <div className="ml-auto mr-[20px]">
      <Gear size={32} color="#8f8f8f" />
    </div>
  </div>
);

export default function App() {
  return (
    <div className="flex flex-col w-[2190px] h-[1580px] overflow-hidden bg-white font-['Open_Sans',sans-serif]">
      <div className="relative flex items-center justify-center h-[38px] shrink-0 bg-gradient-to-b from-[#ececec] to-[#d2d2d2] border-b-2 border-[#a9a9a9]">
        <div className="absolute left-3 top-1 flex gap-4">
          <div className="w-6 h-6 rounded-full bg-[#f4645c] border border-[#d9534c]" />
          <div className="w-6 h-6 rounded-full bg-[#fac24c] border border-[#dda53a]" />
          <div className="w-6 h-6 rounded-full bg-[#5ec654] border border-[#4cab44]" />
        </div>
        <span className="text-[24.5px] leading-none text-[#3c3c3c]">Autodesk Fusion 360 (Education License)</span>
      </div>
      <TopBar />
      <Ribbon />
      <div className="relative flex-1 flex flex-col justify-between min-h-0 pt-2">
        <Tv />
        <ViewCube />
        <div className="relative">
          <PanelHead
            title="BROWSER"
            left={
              <Svg w={19} h={12}>
                <polygon points="0,6 10,0 10,12" fill="#333" />
                <polygon points="9,6 19,0 19,12" fill="#333" />
              </Svg>
            }
          >
            <Svg w={16} h={16}>
              <rect width="16" height="16" rx="6" fill="#333" />
              <rect x="2" y="7" width="12" height="2.5" fill="#bbb" />
            </Svg>
          </PanelHead>
          <Tree />
        </div>
        <div className="relative flex items-end">
          <div className="mb-[10px]">
            <PanelHead title="COMMENTS">
              <Svg w={16} h={16}>
                <rect width="16" height="16" rx="6" fill="#333" />
                <path d="M8 3V13M3 8H13" stroke="#bbb" strokeWidth="2.2" />
              </Svg>
            </PanelHead>
          </div>
          <NavBar />
        </div>
      </div>
      <Timeline />
      <div className="h-[6px] shrink-0 bg-gradient-to-r from-[#c8b66a] to-[#a39350]" />
    </div>
  );
}
